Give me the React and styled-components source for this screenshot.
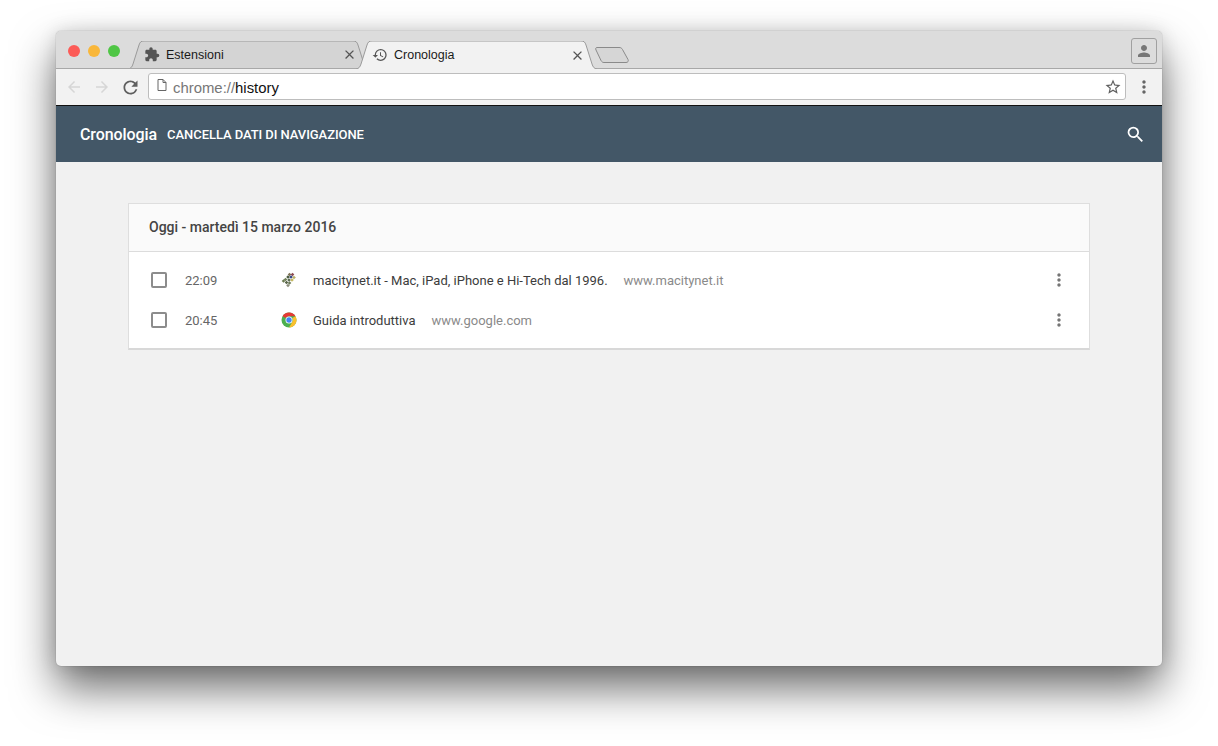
import React from "react";
import styled, { createGlobalStyle } from "styled-components";
import { MdSearch, MdMoreVert, MdExtension, MdHistory, MdClose, MdRefresh, MdArrowBack, MdArrowForward, MdStarBorder, MdPerson } from "react-icons/md";

const GlobalStyle = createGlobalStyle`
  html, body {
    margin: 0;
    padding: 0;
    background: #fff;
    overflow: hidden;
  }
`;

const Page = styled.div`
  width: 1218px;
  height: 746px;
  padding: 31px 56px 80px;
  box-sizing: border-box;
  background: #fff;
  font-family: Roboto, "Liberation Sans", sans-serif;
`;

const Win = styled.div`
  width: 1106px;
  height: 635px;
  display: flex;
  flex-direction: column;
  border-radius: 5px;
  overflow: hidden;
  background: #f1f1f1;
  box-shadow: 0 0 1px rgba(0, 0, 0, 0.5);
`;

const Shadow = styled.div`
  border-radius: 5px;
  box-shadow: 0 22px 44px rgba(0, 0, 0, 0.58), 0 0 18px rgba(0, 0, 0, 0.12);
`;

const TabStrip = styled.div`
  height: 38px;
  box-sizing: border-box;
  display: flex;
  align-items: flex-end;
  background: #dcdcdc;
  border-bottom: 1px solid #a8a8a8;
  padding: 0 5px 0 12px;
`;

const Lights = styled.div`
  display: flex;
  gap: 8px;
  align-self: flex-start;
  margin-top: 14px;
  margin-right: 8px;
`;

const Light = styled.span`
  width: 12px;
  height: 12px;
  border-radius: 50%;
  background: ${(p) => p.$color};
`;

const Tab = styled.div`
  position: relative;
  width: 241px;
  height: ${(p) => (p.$active ? "28px" : "27px")};
  margin-right: -13px;
  margin-bottom: ${(p) => (p.$active ? "-1px" : "0")};
  z-index: ${(p) => (p.$active ? 2 : 1)};
  display: flex;
  align-items: center;
  padding: 0 12px 0 16px;
  box-sizing: border-box;
  font-family: "Liberation Sans", Arial, sans-serif;
  font-size: 12.5px;
  color: #1a1a1a;
`;

const TabShape = styled.svg`
  position: absolute;
  left: 0;
  top: 0;
`;

const TabIcon = styled.span`
  position: relative;
  display: flex;
  width: 16px;
  margin-right: 6px;
  color: #555;
`;

const TabLabel = styled.span`
  position: relative;
  flex: 1;
`;

const TabClose = styled.span`
  position: relative;
  display: flex;
  color: #555;
`;

const NewTab = styled.svg`
  margin: 0 0 4px 10px;
  flex: none;
`;

const Spacer = styled.div`
  flex: 1;
`;

const Profile = styled.div`
  align-self: flex-start;
  margin-top: 7px;
  width: 24px;
  height: 24px;
  border: 1px solid #a0a0a0;
  border-radius: 3px;
  display: flex;
  align-items: center;
  justify-content: center;
  color: #777;
`;

const Toolbar = styled.div`
  height: 36px;
  box-sizing: border-box;
  display: flex;
  align-items: center;
  background: #f2f2f2;
  padding: 0 0 0 4px;
`;

const NavButton = styled.span`
  display: flex;
  width: 28px;
  justify-content: center;
  color: ${(p) => (p.$disabled ? "#d6d6d6" : "#5f5f5f")};
`;

const Omnibox = styled.div`
  flex: 1;
  height: 27px;
  margin: 0 0 1px 4px;
  box-sizing: border-box;
  display: flex;
  align-items: center;
  background: #fff;
  border: 1px solid #bdbdbd;
  border-radius: 3px;
  padding: 0 3px 0 8px;
`;

const PageIcon = styled.svg`
  margin-right: 6px;
  margin-top: -3px;
  flex: none;
`;

const Url = styled.span`
  flex: 1;
  padding-top: 2px;
  font-family: "Liberation Sans", Arial, sans-serif;
  font-size: 14.9px;
`;

const Scheme = styled.span`
  color: #777;
`;

const Path = styled.span`
  color: #111;
`;

const StarIcon = styled.span`
  display: flex;
  color: #606060;
`;

const MenuDots = styled.span`
  display: flex;
  width: 36px;
  justify-content: center;
  color: #666;
`;

const Header = styled.header`
  height: 57px;
  box-sizing: border-box;
  border-top: 1px solid #111;
  display: flex;
  align-items: center;
  background: #435767;
  color: #fff;
  padding: 0 16px 0 24px;
`;

const Title = styled.h1`
  margin: 0 10px 0 0;
  font-size: 16px;
  font-weight: 500;
  letter-spacing: -0.005em;
`;

const ClearLink = styled.span`
  flex: 1;
  font-size: 13px;
  font-weight: 500;
  letter-spacing: -0.005em;
`;

const Content = styled.main`
  flex: 1;
  padding: 41px 72px 0 72px;
`;

const Card = styled.section`
  background: #fff;
  border: 1px solid #dedede;
  border-bottom: 2px solid #d8d8d8;
`;

const CardHead = styled.h2`
  margin: 0;
  height: 48px;
  box-sizing: border-box;
  display: flex;
  align-items: center;
  padding: 0 0 2px 20px;
  background: #fafafa;
  border-bottom: 1px solid #dcdcdc;
  font-size: 14px;
  font-weight: 500;
  color: #444;
`;

const List = styled.div`
  padding: 8px 0 8px;
`;

const Row = styled.div`
  height: 40px;
  display: flex;
  align-items: center;
  padding-left: 22px;
  font-size: 13px;
  color: #3c3c3c;
`;

const Check = styled.span`
  width: 12px;
  height: 12px;
  border: 2px solid #8c8c8c;
  border-radius: 2px;
  margin-right: 18px;
  flex: none;
`;

const Time = styled.span`
  width: 96px;
  color: #666;
`;

const Favicon = styled.svg`
  flex: none;
  margin-right: 16px;
`;

const PageTitle = styled.span`
  margin-right: 16px;
`;

const Domain = styled.span`
  flex: 1;
  color: #8a8a8a;
`;

const RowMenu = styled.span`
  display: flex;
  width: 20px;
  justify-content: center;
  margin-right: 20px;
  color: #757575;
`;

const tabPath = "M0 28 C3 27.500 4 26 5 23 L11 4 C12 1 13 0 16 0 L225 0 C228 0 229 1 230 4 L236 23 C237 26 238 27.500 241 28";

// diamonds of the macitynet logo, a small diagonal lattice
const macityBlocks = [
  [8.5, 2.500, "#7f7356"], [11.500, 2.500, "#8c4a52"], [10, 5, "#32478a"], [13, 5.500, "#b9b066"],
  [7, 5, "#4a5a3e"], [4.500, 7.500, "#74835c"], [8, 8, "#5a6a50"], [11, 8, "#c4b860"],
  [2.500, 9, "#6b7a52"], [5.500, 10.500, "#59654a"], [8.500, 11, "#6c7a5a"], [7, 13.500, "#8b8d7a"],
];

const MacityIcon = () => (
  <Favicon width="16" height="16" viewBox="0 0 16 16">
    {macityBlocks.map(([x, y, color]) => (
      <polygon key={`${x}-${y}`} points={`${x},${y - 1.8} ${x + 1.8},${y} ${x},${y + 1.8} ${x - 1.8},${y}`} fill={color} />
    ))}
  </Favicon>
);

const ChromeIcon = () => (
  <Favicon width="16" height="16" viewBox="0 0 16 16">
    <circle cx="8" cy="8" r="7.500" fill="#4caf50" />
    <path d="M8 .5 A7.500 7.500 0 0 1 14.500 4.250 L8 4.250 A3.750 3.750 0 0 0 4.750 6.100 L1.500 4.250 A7.500 7.500 0 0 1 8 .5 Z" fill="#e53935" />
    <path d="M14.500 4.250 A7.500 7.500 0 0 1 8 15.500 L11.250 9.900 A3.750 3.750 0 0 0 11.250 6.100 Z" fill="#fbc02d" />
    <circle cx="8" cy="8" r="3.500" fill="#fff" />
    <circle cx="8" cy="8" r="2.700" fill="#4285f4" />
  </Favicon>
);

const entries = [
  { time: "22:09", title: "macitynet.it - Mac, iPad, iPhone e Hi-Tech dal 1996.", domain: "www.macitynet.it", icon: <MacityIcon /> },
  { time: "20:45", title: "Guida introduttiva", domain: "www.google.com", icon: <ChromeIcon /> },
];

const App = () => (
  <Page>
    <GlobalStyle />
    <Shadow>
      <Win>
        <TabStrip>
          <Lights>
            <Light $color="#fc5b57" />
            <Light $color="#f9b73a" />
            <Light $color="#4fc645" />
          </Lights>
          <Tab>
            <TabShape width="241" height="27">
              <path d={tabPath} fill="#d4d4d4" stroke="#9a9a9a" />
            </TabShape>
            <TabIcon><MdExtension size={17} /></TabIcon>
            <TabLabel>Estensioni</TabLabel>
            <TabClose><MdClose size={15} /></TabClose>
          </Tab>
          <Tab $active>
            <TabShape width="241" height="28">
              <path d={tabPath} fill="#f2f2f2" stroke="#9a9a9a" />
            </TabShape>
            <TabIcon><MdHistory size={16} /></TabIcon>
            <TabLabel>Cronologia</TabLabel>
            <TabClose><MdClose size={15} /></TabClose>
          </Tab>
          <NewTab width="36" height="18" viewBox="0 0 36 18">
            <path d="M3 1.500 L25 1.500 C27 1.500 27.500 2 28.500 3.500 L34 13.500 C34.800 15 34 16.500 32 16.500 L10 16.500 C8.500 16.500 8 16 7 14.500 L2 4 C1.300 2.500 1.800 1.500 3 1.500 Z" fill="#d6d6d6" stroke="#8a8a8a" />
          </NewTab>
          <Spacer />
          <Profile><MdPerson size={18} /></Profile>
        </TabStrip>
        <Toolbar>
          <NavButton $disabled><MdArrowBack size={18} /></NavButton>
          <NavButton $disabled><MdArrowForward size={18} /></NavButton>
          <NavButton><MdRefresh size={21} /></NavButton>
          <Omnibox>
            <PageIcon width="10" height="12" viewBox="0 0 10 12">
              <path d="M1 .5H6L9 3.500V11.500H1Z M6 .5V3.500H9" fill="none" stroke="#666" />
            </PageIcon>
            <Url>
              <Scheme>chrome://</Scheme>
              <Path>history</Path>
            </Url>
            <StarIcon><MdStarBorder size={18} /></StarIcon>
          </Omnibox>
          <MenuDots><MdMoreVert size={20} /></MenuDots>
        </Toolbar>
        <Header>
          <Title>Cronologia</Title>
          <ClearLink>CANCELLA DATI DI NAVIGAZIONE</ClearLink>
          <MdSearch size={21} />
        </Header>
        <Content>
          <Card>
            <CardHead>Oggi - martedì 15 marzo 2016</CardHead>
            <List>
              {entries.map((e) => (
                <Row key={e.time}>
                  <Check />
                  <Time>{e.time}</Time>
                  {e.icon}
                  <PageTitle>{e.title}</PageTitle>
                  <Domain>{e.domain}</Domain>
                  <RowMenu><MdMoreVert size={20} /></RowMenu>
                </Row>
              ))}
            </List>
          </Card>
        </Content>
      </Win>
    </Shadow>
  </Page>
);

export default App;
